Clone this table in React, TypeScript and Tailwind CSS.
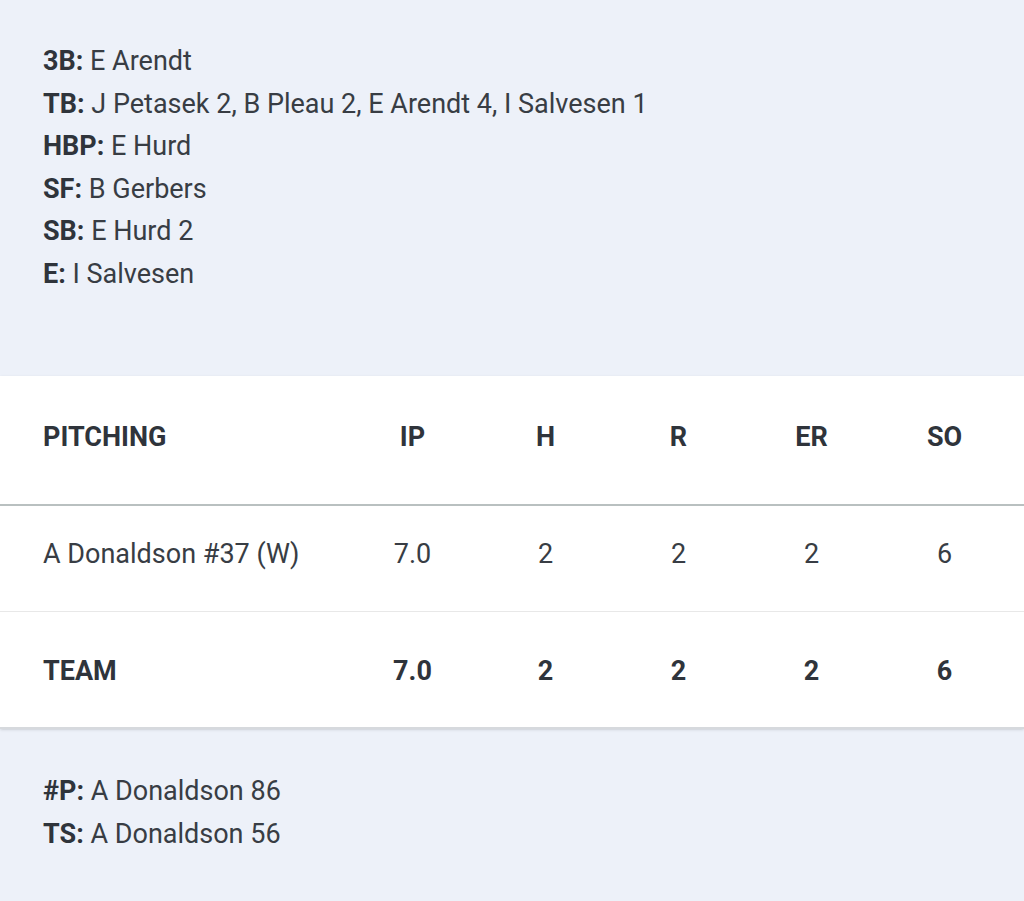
const notes = [
  { label: "3B", text: "E Arendt" },
  { label: "TB", text: "J Petasek 2, B Pleau 2, E Arendt 4, I Salvesen 1" },
  { label: "HBP", text: "E Hurd" },
  { label: "SF", text: "B Gerbers" },
  { label: "SB", text: "E Hurd 2" },
  { label: "E", text: "I Salvesen" },
];

const pitchNotes = [
  { label: "#P", text: "A Donaldson 86" },
  { label: "TS", text: "A Donaldson 56" },
];

const cols = ["IP", "H", "R", "ER", "SO"];

const rows = [
  { name: "A Donaldson #37 (W)", stats: ["7.0", "2", "2", "2", "6"] },
];
const team = { name: "TEAM", stats: ["7.0", "2", "2", "2", "6"] };

const NoteList = ({ items }: { items: { label: string; text: string }[] }) => (
  <div>
    {items.map((n) => (
      <p key={n.label} className="leading-[42.6px]">
        <span className="font-bold text-[#2f343b]">{n.label}:</span> {n.text}
      </p>
    ))}
  </div>
);

const App = () => {
  return (
    <div
      className="w-[1024px] h-[901px] bg-[#edf1f9] text-[27px] text-[#383d44] overflow-hidden"
      style={{ fontFamily: "Roboto, 'Liberation Sans', sans-serif" }}
    >
      <div className="h-[376px] pt-[40px] pl-[43px]">
        <NoteList items={notes} />
      </div>

      <div className="bg-white border-b-2 border-[#d6d9dd] shadow-sm">
        <div className="h-[130px] grid grid-cols-[303px_repeat(5,133px)] items-center pl-[43px] pb-[6px] font-bold text-[#2f343b] border-b-2 border-[#b9c0c0]">
          <div>PITCHING</div>
          {cols.map((c) => (
            <div key={c} className="text-center">
              {c}
            </div>
          ))}
        </div>
        {rows.map((r) => (
          <div
            key={r.name}
            className="h-[106px] grid grid-cols-[303px_repeat(5,133px)] items-center pl-[43px] pb-[8px] border-b border-[#e8e8e8]"
          >
            <div>{r.name}</div>
            {r.stats.map((s, i) => (
              <div key={i} className="text-center">
                {s}
              </div>
            ))}
          </div>
        ))}
        <div className="h-[115px] grid grid-cols-[303px_repeat(5,133px)] items-center pl-[43px] pt-[4px] font-bold text-[#2f343b]">
          <div>{team.name}</div>
          {team.stats.map((s, i) => (
            <div key={i} className="text-center">
              {s}
            </div>
          ))}
        </div>
      </div>

      <div className="pt-[41px] pl-[43px]">
        <NoteList items={pitchNotes} />
      </div>
    </div>
  );
};

export default App;
